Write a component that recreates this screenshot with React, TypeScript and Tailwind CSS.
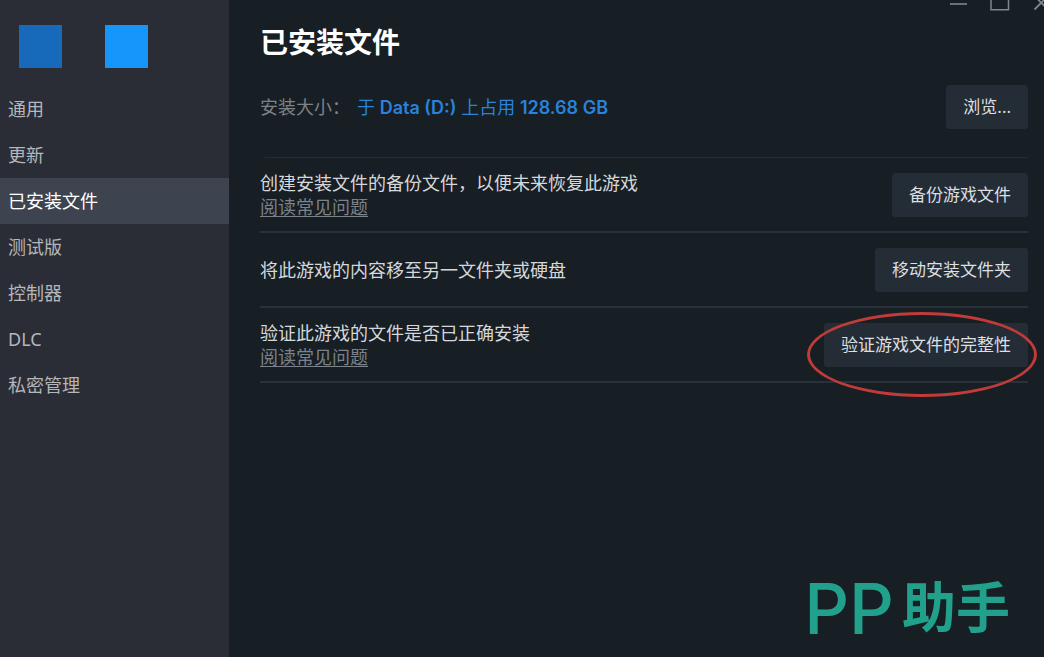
import React from 'react';

const tabs = ['通用', '更新', '已安装文件', '测试版', '控制器', 'DLC', '私密管理'];

type ActionRow = {
  title: string;
  button: string;
  faq?: boolean;
  circled?: boolean;
};

const rows: ActionRow[] = [
  { title: '创建安装文件的备份文件，以便未来恢复此游戏', button: '备份游戏文件', faq: true },
  { title: '将此游戏的内容移至另一文件夹或硬盘', button: '移动安装文件夹' },
  { title: '验证此游戏的文件是否已正确安装', button: '验证游戏文件的完整性', faq: true, circled: true },
];

function ActionButton({ children }: { children: React.ReactNode }) {
  return (
    <button
      type="button"
      className="h-11 whitespace-nowrap rounded-[3px] bg-[#242d35] px-[17px] text-[17px] leading-6 text-[#dcdfe3]"
    >
      {children}
    </button>
  );
}

function WindowControls() {
  return (
    <div className="absolute right-0 top-0 flex h-3 overflow-hidden text-[#7f868c]">
      <button type="button" aria-label="最小化" className="h-3 w-10">
        <svg width="40" height="12" viewBox="0 0 40 12" fill="none" stroke="currentColor" strokeWidth="1.6">
          <path d="M10 4H27" />
        </svg>
      </button>
      <button type="button" aria-label="最大化" className="h-3 w-10">
        <svg width="40" height="12" viewBox="0 0 40 12" fill="none" stroke="currentColor" strokeWidth="1.5">
          <path d="M11 -8H28.5V9.8H11Z" />
        </svg>
      </button>
      <button type="button" aria-label="关闭" className="h-3 w-6">
        <svg width="24" height="12" viewBox="0 0 24 12" fill="none" stroke="currentColor" strokeWidth="1.8">
          <path d="M14.5 9.5L28 -4M14.5 -4L28 9.5" />
        </svg>
      </button>
    </div>
  );
}

export default function App() {
  return (
    <div className="relative flex min-h-screen overflow-hidden bg-[#171e24] font-['Noto_Sans','Noto_Sans_CJK_SC',sans-serif] text-lg leading-6 text-[#d5d8db]">
      <aside className="w-[229px] shrink-0 bg-[#2b2d36]">
        <div className="flex gap-[43px] pb-[18px] pl-[19px] pt-[25px]">
          <div className="size-[43px] bg-[#1769b9]" />
          <div className="size-[43px] bg-[#1695fb]" />
        </div>
        <nav className="flex flex-col">
          {tabs.map((tab) => (
            <a
              key={tab}
              href="#"
              aria-current={tab === '已安装文件' ? 'page' : undefined}
              className={
                tab === '已安装文件'
                  ? 'flex h-[46px] items-center bg-[#3d4450] px-2 text-white'
                  : 'flex h-[46px] items-center px-2 text-[#b4b7bb]'
              }
            >
              {tab}
            </a>
          ))}
        </nav>
      </aside>

      <main className="flex min-w-0 grow flex-col pb-5 pl-[31px] pr-4">
        <h1 className="pt-6 text-[28px] font-bold leading-9 text-white">已安装文件</h1>

        <div className="mt-[25px] flex items-center justify-between pb-7">
          <p className="flex gap-[7px]">
            <span className="text-[#7d8288]">安装大小：</span>
            <span className="text-[#2a82da]">
              于 <span className="font-['Inter',sans-serif] font-semibold">Data (D:)</span> 上占用{' '}
              <span className="font-['Inter',sans-serif] font-semibold">128.68 GB</span>
            </span>
          </p>
          <ActionButton>浏览...</ActionButton>
        </div>

        <hr className="ml-[5px] border-[#252c33]" />

        {rows.map((row) => (
          <section key={row.title} className="flex h-[75px] items-center justify-between border-b-2 border-[#29313a]">
            <div>
              <p>{row.title}</p>
              {row.faq && (
                <a href="#" className="block w-fit text-[#7b828a] underline underline-offset-2">
                  阅读常见问题
                </a>
              )}
            </div>
            <div className="relative">
              <ActionButton>{row.button}</ActionButton>
              {row.circled && (
                <div className="pointer-events-none absolute -bottom-[30px] -left-[17px] -right-[9px] -top-[11px] rounded-[50%] border-[3px] border-[#c03b39]" />
              )}
            </div>
          </section>
        ))}

        <div className="mt-auto flex items-center justify-end gap-2 pr-[18px] font-['Inter','Noto_Sans_CJK_SC',sans-serif] leading-[56px] text-[#21a08c]">
          <span className="text-[70px] font-medium">PP</span>
          <span className="text-[54px] font-bold">助手</span>
        </div>
      </main>

      <WindowControls />
    </div>
  );
}
